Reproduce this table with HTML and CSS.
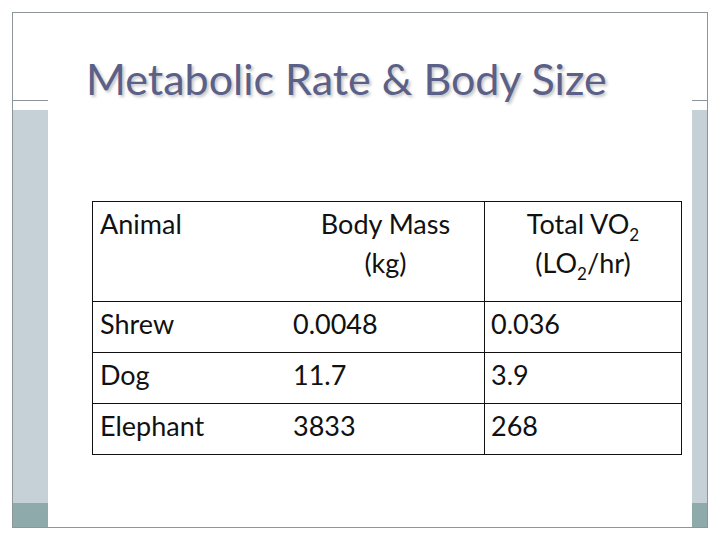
FILE: index.html
```html
<!DOCTYPE html>
<html>
<head>
<meta charset="utf-8">
<link rel="stylesheet" href="styles.css">
</head>
<body>
<div class="slide">
  <div class="side side-left">
    <div class="side-top"></div>
    <div class="side-band"></div>
    <div class="side-foot"></div>
  </div>
  <div class="main">
    <h1 class="title">Metabolic Rate &amp; Body Size</h1>
    <div class="tbl">
      <div class="row head">
        <div class="cell c1">Animal</div>
        <div class="cell c2 center">Body Mass<br>(kg)</div>
        <div class="cell c3 center">Total VO<sub>2</sub><br>(LO<sub>2</sub>/hr)</div>
      </div>
      <div class="row">
        <div class="cell c1">Shrew</div>
        <div class="cell c2">0.0048</div>
        <div class="cell c3">0.036</div>
      </div>
      <div class="row">
        <div class="cell c1">Dog</div>
        <div class="cell c2">11.7</div>
        <div class="cell c3">3.9</div>
      </div>
      <div class="row">
        <div class="cell c1">Elephant</div>
        <div class="cell c2">3833</div>
        <div class="cell c3">268</div>
      </div>
    </div>
  </div>
  <div class="side side-right">
    <div class="side-top"></div>
    <div class="side-band"></div>
    <div class="side-foot"></div>
  </div>
</div>
</body>
</html>
```

FILE: styles.css
```css
html, body {
  margin: 0;
  padding: 0;
  background: #ffffff;
}

.slide {
  margin: 12px 0 0 12px;
  width: 694px;
  height: 514px;
  border: 1px solid #8a9699;
  display: grid;
  grid-template-columns: 35px 1fr 15px;
}

.side {
  display: flex;
  flex-direction: column;
}

.side-top {
  height: 87px;
  border-bottom: 1px solid #8a9699;
  margin-bottom: 9px;
}

.side-band {
  flex: 1;
  background: #c5d1d7;
}

.side-foot {
  height: 24px;
  background: #8eaaab;
}

.main {
  min-width: 0;
}

.title {
  margin: 0;
  padding: 41px 0 0 38px;
  height: 50px;
  font-family: "Lato", "DejaVu Sans", sans-serif;
  font-weight: 400;
  font-size: 43px;
  line-height: 50px;
  color: #5a6087;
  text-shadow: 2px 2px 3px rgba(80, 80, 90, 0.35);
  white-space: nowrap;
}

.tbl {
  margin: 97px 0 0 44px;
  width: 588px;
  border: 1px solid #111;
  border-bottom: none;
  font-family: "Lato", "Liberation Sans", sans-serif;
  font-size: 27px;
  line-height: 39px;
  color: #111;
}

.row {
  display: grid;
  grid-template-columns: 193px 198px 197px;
  height: 50px;
  border-bottom: 1px solid #111;
}

.row.head {
  height: 99px;
}

.cell {
  padding: 2px 6px 0 7px;
}

.c3 {
  border-left: 1px solid #111;
  padding-left: 6px;
}

.center {
  text-align: center;
}

sub {
  font-size: 17px;
  line-height: 0;
  vertical-align: -7px;
}
```
